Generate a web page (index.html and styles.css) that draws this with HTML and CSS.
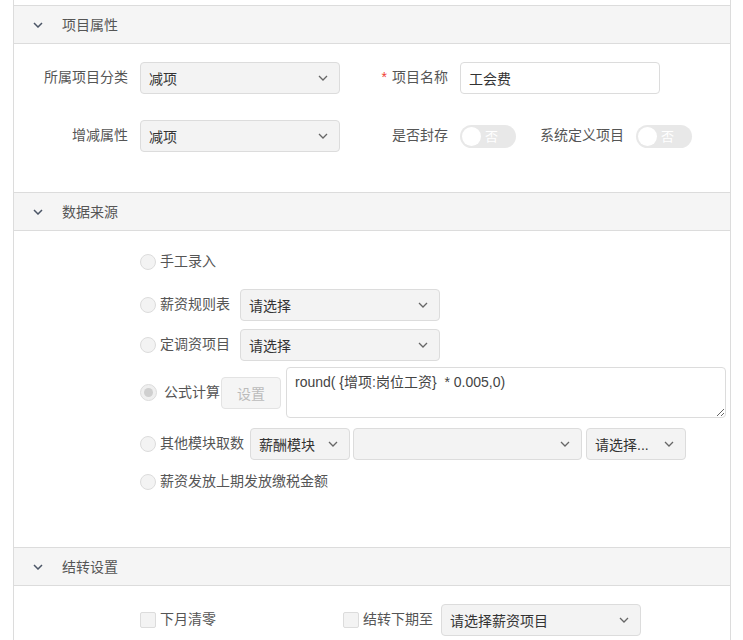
FILE: index.html
```html
<!DOCTYPE html>
<html lang="zh-CN">
<head>
<meta charset="utf-8">
<title>薪资项目</title>
<link rel="stylesheet" href="styles.css">
</head>
<body>
<div class="panel">
  <section class="sec">
    <div class="sec-head">
      <svg class="chev" width="10" height="6" viewBox="0 0 10 6"><polyline points="1,1 5,5 9,1" fill="none" stroke="#4b5566" stroke-width="1.5"/></svg>
      <span class="sec-title">项目属性</span>
    </div>
    <div class="sec-body props">
      <div class="frow">
        <div class="fitem">
          <label class="flabel">所属项目分类</label>
          <div class="select w200"><span class="val">减项</span><svg class="arr" width="10" height="6" viewBox="0 0 10 6"><polyline points="1,1 5,5 9,1" fill="none" stroke="#666" stroke-width="1.3"/></svg></div>
        </div>
        <div class="fitem">
          <label class="flabel"><i class="req">*</i>项目名称</label>
          <div class="input w200">工会费</div>
        </div>
      </div>
      <div class="frow row2">
        <div class="fitem">
          <label class="flabel">增减属性</label>
          <div class="select w200"><span class="val">减项</span><svg class="arr" width="10" height="6" viewBox="0 0 10 6"><polyline points="1,1 5,5 9,1" fill="none" stroke="#666" stroke-width="1.3"/></svg></div>
        </div>
        <div class="fitem">
          <label class="flabel">是否封存</label>
          <div class="switch"><span class="knob"></span><span class="stext">否</span></div>
          <label class="flabel2">系统定义项目</label>
          <div class="switch"><span class="knob"></span><span class="stext">否</span></div>
        </div>
      </div>
    </div>
  </section>

  <section class="sec">
    <div class="sec-head">
      <svg class="chev" width="10" height="6" viewBox="0 0 10 6"><polyline points="1,1 5,5 9,1" fill="none" stroke="#4b5566" stroke-width="1.5"/></svg>
      <span class="sec-title">数据来源</span>
    </div>
    <div class="sec-body source">
      <div class="rrow s1">
        <span class="radio"></span><span class="rlabel">手工录入</span>
      </div>
      <div class="rrow s2">
        <span class="radio"></span><span class="rlabel gap10">薪资规则表</span>
        <div class="select w200"><span class="val">请选择</span><svg class="arr" width="10" height="6" viewBox="0 0 10 6"><polyline points="1,1 5,5 9,1" fill="none" stroke="#666" stroke-width="1.3"/></svg></div>
      </div>
      <div class="rrow s3">
        <span class="radio"></span><span class="rlabel gap10">定调资项目</span>
        <div class="select w200"><span class="val">请选择</span><svg class="arr" width="10" height="6" viewBox="0 0 10 6"><polyline points="1,1 5,5 9,1" fill="none" stroke="#666" stroke-width="1.3"/></svg></div>
      </div>
      <div class="rrow s4">
        <span class="radio checked"><span class="dot"></span></span><span class="rlabel formula">公式计算</span>
        <button class="btn-dis" type="button">设置</button>
        <textarea class="formula-box">round( {增项:岗位工资}  * 0.005,0)</textarea>
      </div>
      <div class="rrow s5">
        <span class="radio"></span><span class="rlabel gap6">其他模块取数</span>
        <div class="select w100"><span class="val">薪酬模块</span><svg class="arr" width="10" height="6" viewBox="0 0 10 6"><polyline points="1,1 5,5 9,1" fill="none" stroke="#666" stroke-width="1.3"/></svg></div>
        <div class="select w229 ml3"><span class="val"></span><svg class="arr" width="10" height="6" viewBox="0 0 10 6"><polyline points="1,1 5,5 9,1" fill="none" stroke="#666" stroke-width="1.3"/></svg></div>
        <div class="select w100 ml4"><span class="val">请选择...</span><svg class="arr" width="10" height="6" viewBox="0 0 10 6"><polyline points="1,1 5,5 9,1" fill="none" stroke="#666" stroke-width="1.3"/></svg></div>
      </div>
      <div class="rrow s6">
        <span class="radio"></span><span class="rlabel">薪资发放上期发放缴税金额</span>
      </div>
    </div>
  </section>

  <section class="sec">
    <div class="sec-head">
      <svg class="chev" width="10" height="6" viewBox="0 0 10 6"><polyline points="1,1 5,5 9,1" fill="none" stroke="#4b5566" stroke-width="1.5"/></svg>
      <span class="sec-title">结转设置</span>
    </div>
    <div class="sec-body carry">
      <div class="crow">
        <div class="citem first">
          <span class="check"></span><span class="clabel">下月清零</span>
        </div>
        <div class="citem">
          <span class="check"></span><span class="clabel gap8">结转下期至</span>
          <div class="select w200"><span class="val">请选择薪资项目</span><svg class="arr" width="10" height="6" viewBox="0 0 10 6"><polyline points="1,1 5,5 9,1" fill="none" stroke="#666" stroke-width="1.3"/></svg></div>
        </div>
      </div>
    </div>
  </section>
</div>
</body>
</html>
```

FILE: styles.css
```css
* { box-sizing: border-box; }
html, body { margin: 0; padding: 0; background: #fff; }
body {
  font-family: "Liberation Sans", "Noto Sans CJK SC", sans-serif;
  font-size: 14px;
  color: #555;
}

.panel {
  margin-left: 13px;
  width: 718px;
  padding-top: 5px;
  border-left: 1px solid #dcdcdc;
  border-right: 1px solid #dcdcdc;
}

.sec-head {
  height: 39px;
  background: #f5f5f5;
  border-top: 1px solid #dcdcdc;
  border-bottom: 1px solid #dcdcdc;
  display: flex;
  align-items: center;
  padding-left: 19px;
}
.chev { display: block; margin-top: 1px; }
.sec-title { margin-left: 19px; color: #555; line-height: 20px; }

/* section 1 */
.props { padding: 18px 0 40px 6px; }
.frow { display: flex; align-items: center; height: 32px; }
.row2 { margin-top: 26px; }
.fitem { display: flex; align-items: center; width: 320px; }
.fitem:last-child { width: auto; }
.flabel {
  width: 108px;
  margin-right: 12px;
  text-align: right;
  color: #555;
  white-space: nowrap;
  line-height: 20px;
  padding-bottom: 2px;
}
.flabel2 {
  margin-left: 24px;
  margin-right: 12px;
  color: #555;
  white-space: nowrap;
  line-height: 20px;
  padding-bottom: 2px;
}
.req {
  font-style: normal;
  color: #f04134;
  margin-right: 5px;
  font-family: "Liberation Sans", sans-serif;
}

.select {
  height: 32px;
  border: 1px solid #dcdcdc;
  border-radius: 4px;
  background: #f3f3f3;
  display: flex;
  align-items: center;
  justify-content: space-between;
  padding: 0 11px 1px 8px;
  color: #333;
  flex-shrink: 0;
}
.select .val { white-space: nowrap; overflow: hidden; }
.arr { display: block; flex-shrink: 0; }
.input {
  height: 32px;
  border: 1px solid #dcdcdc;
  border-radius: 4px;
  background: #fff;
  display: flex;
  align-items: center;
  padding: 0 8px 1px;
  color: #333;
}
.w200 { width: 200px; }
.w100 { width: 100px; }
.w229 { width: 229px; }
.ml3 { margin-left: 3px; }
.ml4 { margin-left: 4px; }

.switch {
  width: 56px;
  height: 23px;
  border-radius: 12px;
  background: #e8e8e8;
  display: flex;
  align-items: center;
  padding-left: 2px;
  flex-shrink: 0;
}
.knob {
  width: 19px;
  height: 19px;
  border-radius: 50%;
  background: #fff;
}
.stext { color: #fff; font-size: 13px; margin-left: 4px; line-height: 1; }

/* section 2 */
.source { padding: 15px 0 49px 126px; }
.rrow { display: flex; align-items: center; min-height: 32px; }
.s2 { margin-top: 11px; }
.s3 { margin-top: 8px; }
.s4 { margin-top: 6px; }
.s5 { margin-top: 10px; }
.s6 { margin-top: 6px; }
.radio {
  width: 16px;
  height: 16px;
  border-radius: 50%;
  border: 1px solid #dcdcdc;
  background: #f3f3f3;
  flex-shrink: 0;
  display: flex;
  align-items: center;
  justify-content: center;
}
.radio.checked { width: 17px; height: 17px; background: #efefef; }
.dot { width: 9px; height: 9px; border-radius: 50%; background: #cfcfcf; }
.rlabel {
  margin-left: 4px;
  color: #555;
  white-space: nowrap;
  line-height: 20px;
  padding-bottom: 2px;
}
.gap10 { margin-right: 10px; }
.gap6 { margin-right: 6px; }
.formula { margin-left: 7px; margin-right: 1px; }
.btn-dis {
  width: 60px;
  height: 32px;
  border: 1px solid #e3e3e3;
  border-radius: 4px;
  background: #f5f5f5;
  color: #bbb;
  font: inherit;
  padding: 0;
  margin-right: 5px;
}
.formula-box {
  width: 440px;
  height: 51px;
  border: 1px solid #dcdcdc;
  border-radius: 4px;
  padding: 4px 8px;
  font: inherit;
  color: #444;
  line-height: 20px;
  background: #fff;
  display: block;
}

/* section 3 */
.carry { padding: 18px 0 4px 126px; }
.crow { display: flex; align-items: center; height: 32px; }
.citem { display: flex; align-items: center; }
.citem.first { width: 203px; }
.check {
  width: 16px;
  height: 16px;
  border: 1px solid #dcdcdc;
  border-radius: 2px;
  background: #f3f3f3;
  flex-shrink: 0;
}
.clabel {
  margin-left: 4px;
  color: #555;
  white-space: nowrap;
  line-height: 20px;
  padding-bottom: 2px;
}
.gap8 { margin-right: 8px; }
```
